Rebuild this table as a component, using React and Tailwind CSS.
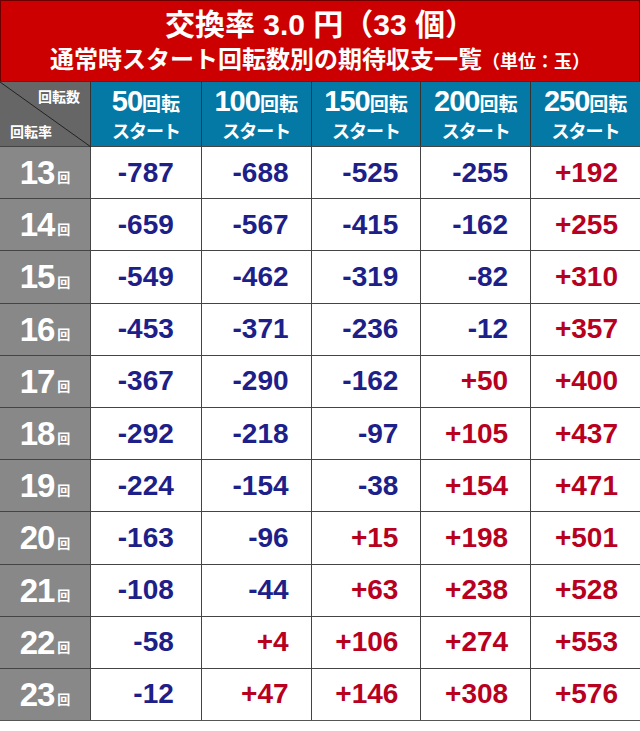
import React from "react";

const cols = [50, 100, 150, 200, 250];

const rows = [
  { rate: 13, vals: [-787, -688, -525, -255, 192] },
  { rate: 14, vals: [-659, -567, -415, -162, 255] },
  { rate: 15, vals: [-549, -462, -319, -82, 310] },
  { rate: 16, vals: [-453, -371, -236, -12, 357] },
  { rate: 17, vals: [-367, -290, -162, 50, 400] },
  { rate: 18, vals: [-292, -218, -97, 105, 437] },
  { rate: 19, vals: [-224, -154, -38, 154, 471] },
  { rate: 20, vals: [-163, -96, 15, 198, 501] },
  { rate: 21, vals: [-108, -44, 63, 238, 528] },
  { rate: 22, vals: [-58, 4, 106, 274, 553] },
  { rate: 23, vals: [-12, 47, 146, 308, 576] },
];

const fmt = (v) => (v > 0 ? "+" + v : "" + v);

const App = () => {
  return (
    <div className="w-[640px] h-[731px] bg-white font-['Liberation_Sans','Noto_Sans_CJK_JP',sans-serif] font-bold">
      {/* タイトル */}
      <div className="h-[81px] bg-[#cc0000] border-t border-l border-r border-[#6b0000] flex flex-col items-center pt-[8px] text-white">
        <div className="text-[30px] leading-[32px]">交換率 3.0 円（33 個）</div>
        <div className="text-[24px] leading-[30px] mt-[4px]">
          通常時スタート回転数別の期待収支一覧
          <span className="text-[18px]">（単位：玉）</span>
        </div>
      </div>

      <div className="grid grid-cols-[91px_repeat(5,1fr)] border-b border-[#555]">
        {/* 見出し */}
        <div className="relative h-[65px] bg-[#666666] border-t border-r border-[#333] text-white text-[14px] leading-[16px]">
          <svg className="absolute inset-0" width="91" height="65" viewBox="0 0 91 65">
            <line x1="0" y1="0" x2="91" y2="65" stroke="#222" strokeWidth="1" />
          </svg>
          <div className="relative flex flex-col justify-between h-full pt-[7px] pb-[6px] px-[10px]">
            <span className="self-end">回転数</span>
            <span className="self-start">回転率</span>
          </div>
        </div>
        {cols.map((c, i) => (
          <div
            key={c}
            className={
              "h-[65px] bg-[#0479a6] border-t border-[#333] text-white flex flex-col items-center justify-center " +
              (i > 0 ? "border-l" : "")
            }
          >
            <div className="leading-[30px]">
              <span className="text-[29px] tracking-[-1px]">{c}</span>
              <span className="text-[19px]">回転</span>
            </div>
            <div className="text-[18px] leading-[22px] tracking-[-1px]">スタート</div>
          </div>
        ))}

        {/* 本体 */}
        {rows.map((r) => (
          <React.Fragment key={r.rate}>
            <div className="h-[52.2px] bg-[#888888] border-t border-r border-[#444] flex items-center justify-center text-white">
              <span className="text-[33px] leading-none tracking-[-1px]">{r.rate}</span>
              <span className="text-[13px] leading-none self-end mb-[14px] ml-[3px]">回</span>
            </div>
            {r.vals.map((v, i) => (
              <div
                key={i}
                className={
                  "h-[52.2px] border-t border-[#444] flex items-center justify-end text-[28px] " +
                  (i > 0 ? "border-l pr-[22px] " : "pr-[27px] ") +
                  (v > 0 ? "text-[#b8001f]" : "text-[#1d2088]")
                }
              >
                {fmt(v)}
              </div>
            ))}
          </React.Fragment>
        ))}
      </div>
    </div>
  );
};

export default App;
